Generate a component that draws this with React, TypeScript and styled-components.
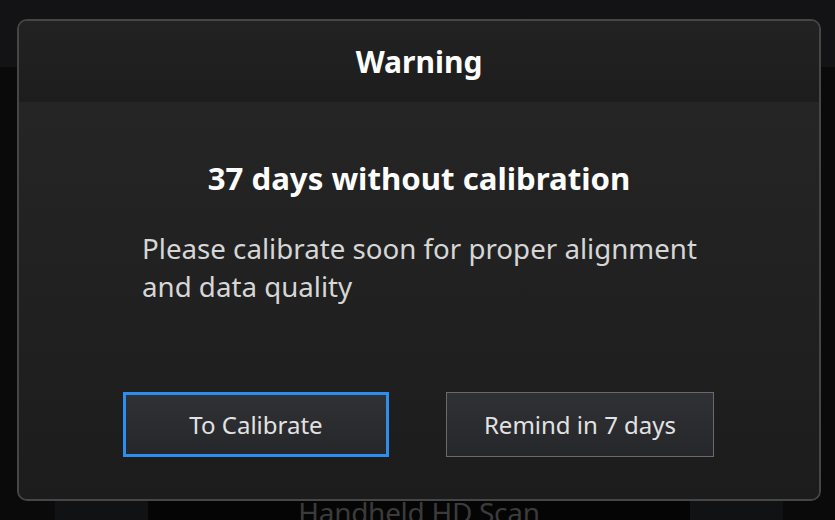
import React from 'react';
import styled, { createGlobalStyle } from 'styled-components';

const GlobalStyle = createGlobalStyle`
  html, body {
    margin: 0;
    padding: 0;
    background: #060606;
    font-family: "Noto Sans", "Open Sans", sans-serif;
  }
`;

function App() {
    return (
        <>
            <GlobalStyle />
            <Screen>
                <TopBar />
                <Workspace>
                    <SidePanel />
                    <Center>
                        <ModeLabel>Handheld HD Scan</ModeLabel>
                    </Center>
                    <SidePanel />
                </Workspace>
            </Screen>
            <Dialog>
                <Header>Warning</Header>
                <Body>
                    <Headline>37 days without calibration</Headline>
                    <Message>
                        Please calibrate soon for proper alignment
                        <br />
                        and data quality
                    </Message>
                    <Actions>
                        <ActionButton $primary>To Calibrate</ActionButton>
                        <ActionButton>Remind in 7 days</ActionButton>
                    </Actions>
                </Body>
            </Dialog>
        </>
    );
}

const Screen = styled.div`
    width: 835px;
    height: 520px;
    display: flex;
    flex-direction: column;
    overflow: hidden;
    background: #0a0a0a;
`;

const TopBar = styled.div`
    height: 67px;
    background: #131315;
`;

const Workspace = styled.div`
    flex: 1;
    display: flex;
    padding: 0 52px 0 55px;
`;

const SidePanel = styled.div`
    width: 93px;
    margin-top: 60px;
    background: #111214;
`;

const Center = styled.div`
    flex: 1;
    display: flex;
    align-items: flex-end;
    justify-content: center;
    background: #050505;
`;

const ModeLabel = styled.div`
    font-size: 28px;
    line-height: 32px;
    margin-bottom: -8px;
    color: #3b3b3b;
    letter-spacing: -0.3px;
`;

const Dialog = styled.div`
    position: fixed;
    left: 17px;
    top: 19px;
    width: 800px;
    height: 478px;
    display: flex;
    flex-direction: column;
    border: 2px solid #464646;
    border-radius: 10px;
    overflow: hidden;
    background: #1c1c1c;
`;

const Header = styled.div`
    height: 81px;
    display: flex;
    align-items: center;
    justify-content: center;
    background: linear-gradient(#222222, #1d1d1d);
    color: #ffffff;
    font-size: 30px;
    font-weight: 700;
`;

const Body = styled.div`
    flex: 1;
    display: flex;
    flex-direction: column;
    align-items: center;
    padding-top: 56px;
    background: linear-gradient(#252525, #1c1c1c);
`;

const Headline = styled.div`
    font-size: 31.2px;
    line-height: 40px;
    font-weight: 700;
    color: #ffffff;
`;

const Message = styled.div`
    align-self: flex-start;
    margin: 31px 0 0 123px;
    font-size: 27.7px;
    line-height: 38px;
    color: #d6d6d6;
`;

const Actions = styled.div`
    display: flex;
    gap: 57px;
    margin-top: 87px;
    padding-right: 1px;
`;

const ActionButton = styled.button<{ $primary?: boolean }>`
    width: ${p => (p.$primary ? '266px' : '268px')};
    height: 65px;
    box-sizing: border-box;
    border: ${p => (p.$primary ? '3px solid #2b8ff0' : '1px solid #6a6a6a')};
    background: linear-gradient(#303135, #26272a);
    color: #e2e2e2;
    font-family: inherit;
    font-size: 24px;
    cursor: pointer;
`;

export default App;
